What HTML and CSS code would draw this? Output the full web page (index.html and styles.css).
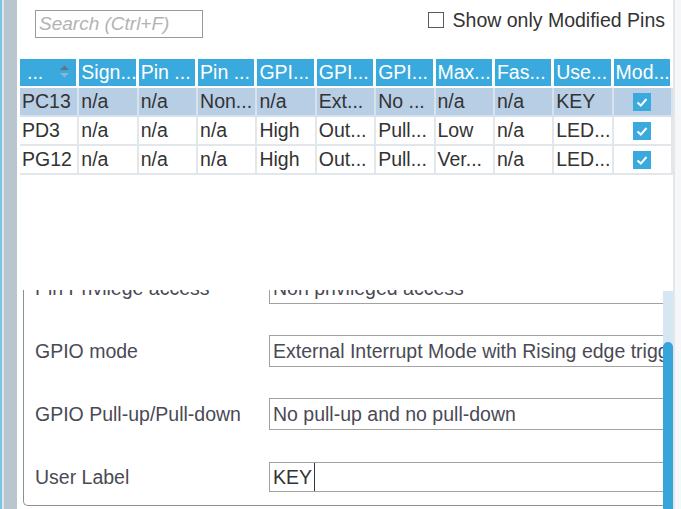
FILE: index.html
```html
<!DOCTYPE html>
<html lang="en">
<head>
  <meta charset="UTF-8" />
  <title>Pinout Configuration - GPIO</title>
  <link rel="stylesheet" href="styles.css">
</head>
<body>
  <div class="frame">
    <div class="rail"></div>

    <div class="main">
      <div class="toolbar">
        <input class="search" type="text" placeholder="Search (Ctrl+F)" />
        <label class="only-modified"><span class="box"></span>Show only Modified Pins</label>
      </div>

      <table class="pins">
        <thead>
          <tr>
            <th class="sorted"><span>...</span>
              <svg class="sort" width="11" height="16" viewBox="0 0 11 16">
                <path d="M1 6 L5.5 1.5 L10 6 Z" fill="#66747e" />
                <path d="M1 9 L5.5 13.5 L10 9 Z" fill="#8cb4cc" />
              </svg>
            </th>
            <th>Sign...</th>
            <th>Pin ...</th>
            <th>Pin ...</th>
            <th>GPI...</th>
            <th>GPI...</th>
            <th>GPI...</th>
            <th>Max...</th>
            <th>Fas...</th>
            <th>Use...</th>
            <th>Mod...</th>
          </tr>
        </thead>
        <tbody>
          <tr class="selected">
            <td>PC13</td><td>n/a</td><td>n/a</td><td>Non...</td><td>n/a</td><td>Ext...</td>
            <td>No ...</td><td>n/a</td><td>n/a</td><td>KEY</td>
            <td class="check"><span class="tick"><svg width="18" height="18" viewBox="0 0 18 18"><path d="M4.5 9.5 L7.8 12.6 L13.5 6" fill="none" stroke="#fff" stroke-width="2" /></svg></span></td>
          </tr>
          <tr>
            <td>PD3</td><td>n/a</td><td>n/a</td><td>n/a</td><td>High</td><td>Out...</td>
            <td>Pull...</td><td>Low</td><td>n/a</td><td>LED...</td>
            <td class="check"><span class="tick"><svg width="18" height="18" viewBox="0 0 18 18"><path d="M4.5 9.5 L7.8 12.6 L13.5 6" fill="none" stroke="#fff" stroke-width="2" /></svg></span></td>
          </tr>
          <tr>
            <td>PG12</td><td>n/a</td><td>n/a</td><td>n/a</td><td>High</td><td>Out...</td>
            <td>Pull...</td><td>Ver...</td><td>n/a</td><td>LED...</td>
            <td class="check"><span class="tick"><svg width="18" height="18" viewBox="0 0 18 18"><path d="M4.5 9.5 L7.8 12.6 L13.5 6" fill="none" stroke="#fff" stroke-width="2" /></svg></span></td>
          </tr>
        </tbody>
      </table>

      <div class="spacer"></div>

      <div class="props">
        <div class="props-body">
          <div class="group">
            <div class="row">
              <span class="label">Pin Privilege access</span>
              <span class="field">Non privileged access</span>
            </div>
            <div class="row">
              <span class="label">GPIO mode</span>
              <span class="field">External Interrupt Mode with Rising edge trigger detection</span>
            </div>
            <div class="row">
              <span class="label">GPIO Pull-up/Pull-down</span>
              <span class="field">No pull-up and no pull-down</span>
            </div>
            <div class="row">
              <span class="label">User Label</span>
              <span class="field editing"><span class="caret">KEY</span></span>
            </div>
          </div>
        </div>
        <div class="scrollbar"><div class="thumb"></div></div>
      </div>
    </div>

    <div class="edge"></div>
  </div>
</body>
</html>
```

FILE: styles.css
```css
:root {
  --header-blue: #3aa9dd;
  --selected: #b8cee5;
  --grid-line: #e2e7eb;
  --text: #333333;
  --label: #4a4a55;
  --field-border: #a2a2a2;
}
* {
  box-sizing: border-box;
}
body {
  margin: 0;
  font-family: "Liberation Sans", Arial, sans-serif;
  font-size: 19.5px;
  color: var(--text);
  background: #fff;
}
.frame {
  display: flex;
  width: 681px;
  height: 509px;
  overflow: hidden;
}
.rail {
  width: 17px;
  flex: none;
  background: linear-gradient(to right,
    #7cc5e8 0, #7cc5e8 2px,
    #dfe6ea 2px, #dfe6ea 4px,
    #bac6cd 4px, #bac6cd 17px);
}
.main {
  width: 658px;
  flex: none;
  display: flex;
  flex-direction: column;
  border-right: 2px solid #e3e7ea;
}
.edge {
  flex: 1;
  background: #f6f7f8;
}

/* toolbar */
.toolbar {
  height: 59px;
  display: flex;
  justify-content: space-between;
  align-items: flex-start;
  padding: 10px 8px 0 18px;
  flex: none;
}
.search {
  width: 168px;
  height: 28px;
  border: 1px solid #9a9a9a;
  padding: 0 3px;
  font-family: inherit;
  font-size: 19px;
  color: var(--text);
}
.search::placeholder {
  color: #b3b3b3;
  font-style: italic;
}
.only-modified {
  display: flex;
  align-items: center;
  gap: 9px;
  height: 20px;
  color: var(--text);
}
.only-modified .box {
  width: 16px;
  height: 16px;
  border: 1px solid #5a5a5a;
  background: #fff;
}

/* pin table */
.pins {
  width: 653px;
  margin-left: 3px;
  table-layout: fixed;
  border-collapse: separate;
  border-spacing: 0;
  flex: none;
}
.pins th,
.pins td {
  white-space: nowrap;
  overflow: hidden;
  text-align: left;
  padding: 0 1px 0 2px;
  font-weight: normal;
}
.pins th {
  height: 29px;
  background: var(--header-blue);
  color: #fff;
  border-right: 3px solid #fff;
  border-bottom: 2px solid #fff;
}
.pins th.sorted {
  padding-left: 7px;
}
.pins th.sorted span {
  display: inline-block;
  width: 27px;
}
.sort {
  vertical-align: -1px;
}
.pins td {
  height: 29px;
  border-right: 2px solid var(--grid-line);
  border-bottom: 2px solid var(--grid-line);
}
.pins tr.selected td {
  background: var(--selected);
  border-right-color: #d6e2ee;
  border-bottom-color: #d6e2ee;
}
.pins td.check {
  text-align: center;
  padding: 0;
}
.tick {
  display: inline-block;
  width: 18px;
  height: 18px;
  background: var(--header-blue);
  vertical-align: middle;
  margin-top: -2px;
}
.tick svg {
  display: block;
}

.spacer {
  flex: 1;
}

/* configuration panel */
.props {
  height: 219px;
  flex: none;
  display: flex;
}
.props-body {
  flex: 1;
  overflow: hidden;
  padding-left: 6px;
}
.group {
  margin-top: -18px;
  border-left: 1px solid #8f8f8f;
  border-bottom: 1px solid #8f8f8f;
  border-bottom-left-radius: 5px;
  padding: 0 0 12px 11px;
  display: flex;
  flex-direction: column;
  gap: 31px;
  width: 700px;
}
.row {
  display: flex;
  align-items: center;
  height: 32px;
  color: var(--label);
}
.label {
  width: 234px;
  flex: none;
  white-space: nowrap;
}
.field {
  width: 440px;
  height: 32px;
  flex: none;
  border: 1px solid var(--field-border);
  padding-left: 3px;
  line-height: 30px;
  white-space: nowrap;
  overflow: hidden;
}
.field.editing {
  height: 30px;
  line-height: 28px;
}
.caret {
  display: inline-block;
  height: 28px;
  padding-right: 2px;
  border-right: 1px solid #333;
  color: var(--text);
}
.scrollbar {
  width: 10px;
  flex: none;
  margin-top: 1px;
  background: #d6e6f3;
  padding-top: 51px;
}
.thumb {
  height: 100%;
  background: #37a4da;
  border-radius: 5px 5px 0 0;
}
```
